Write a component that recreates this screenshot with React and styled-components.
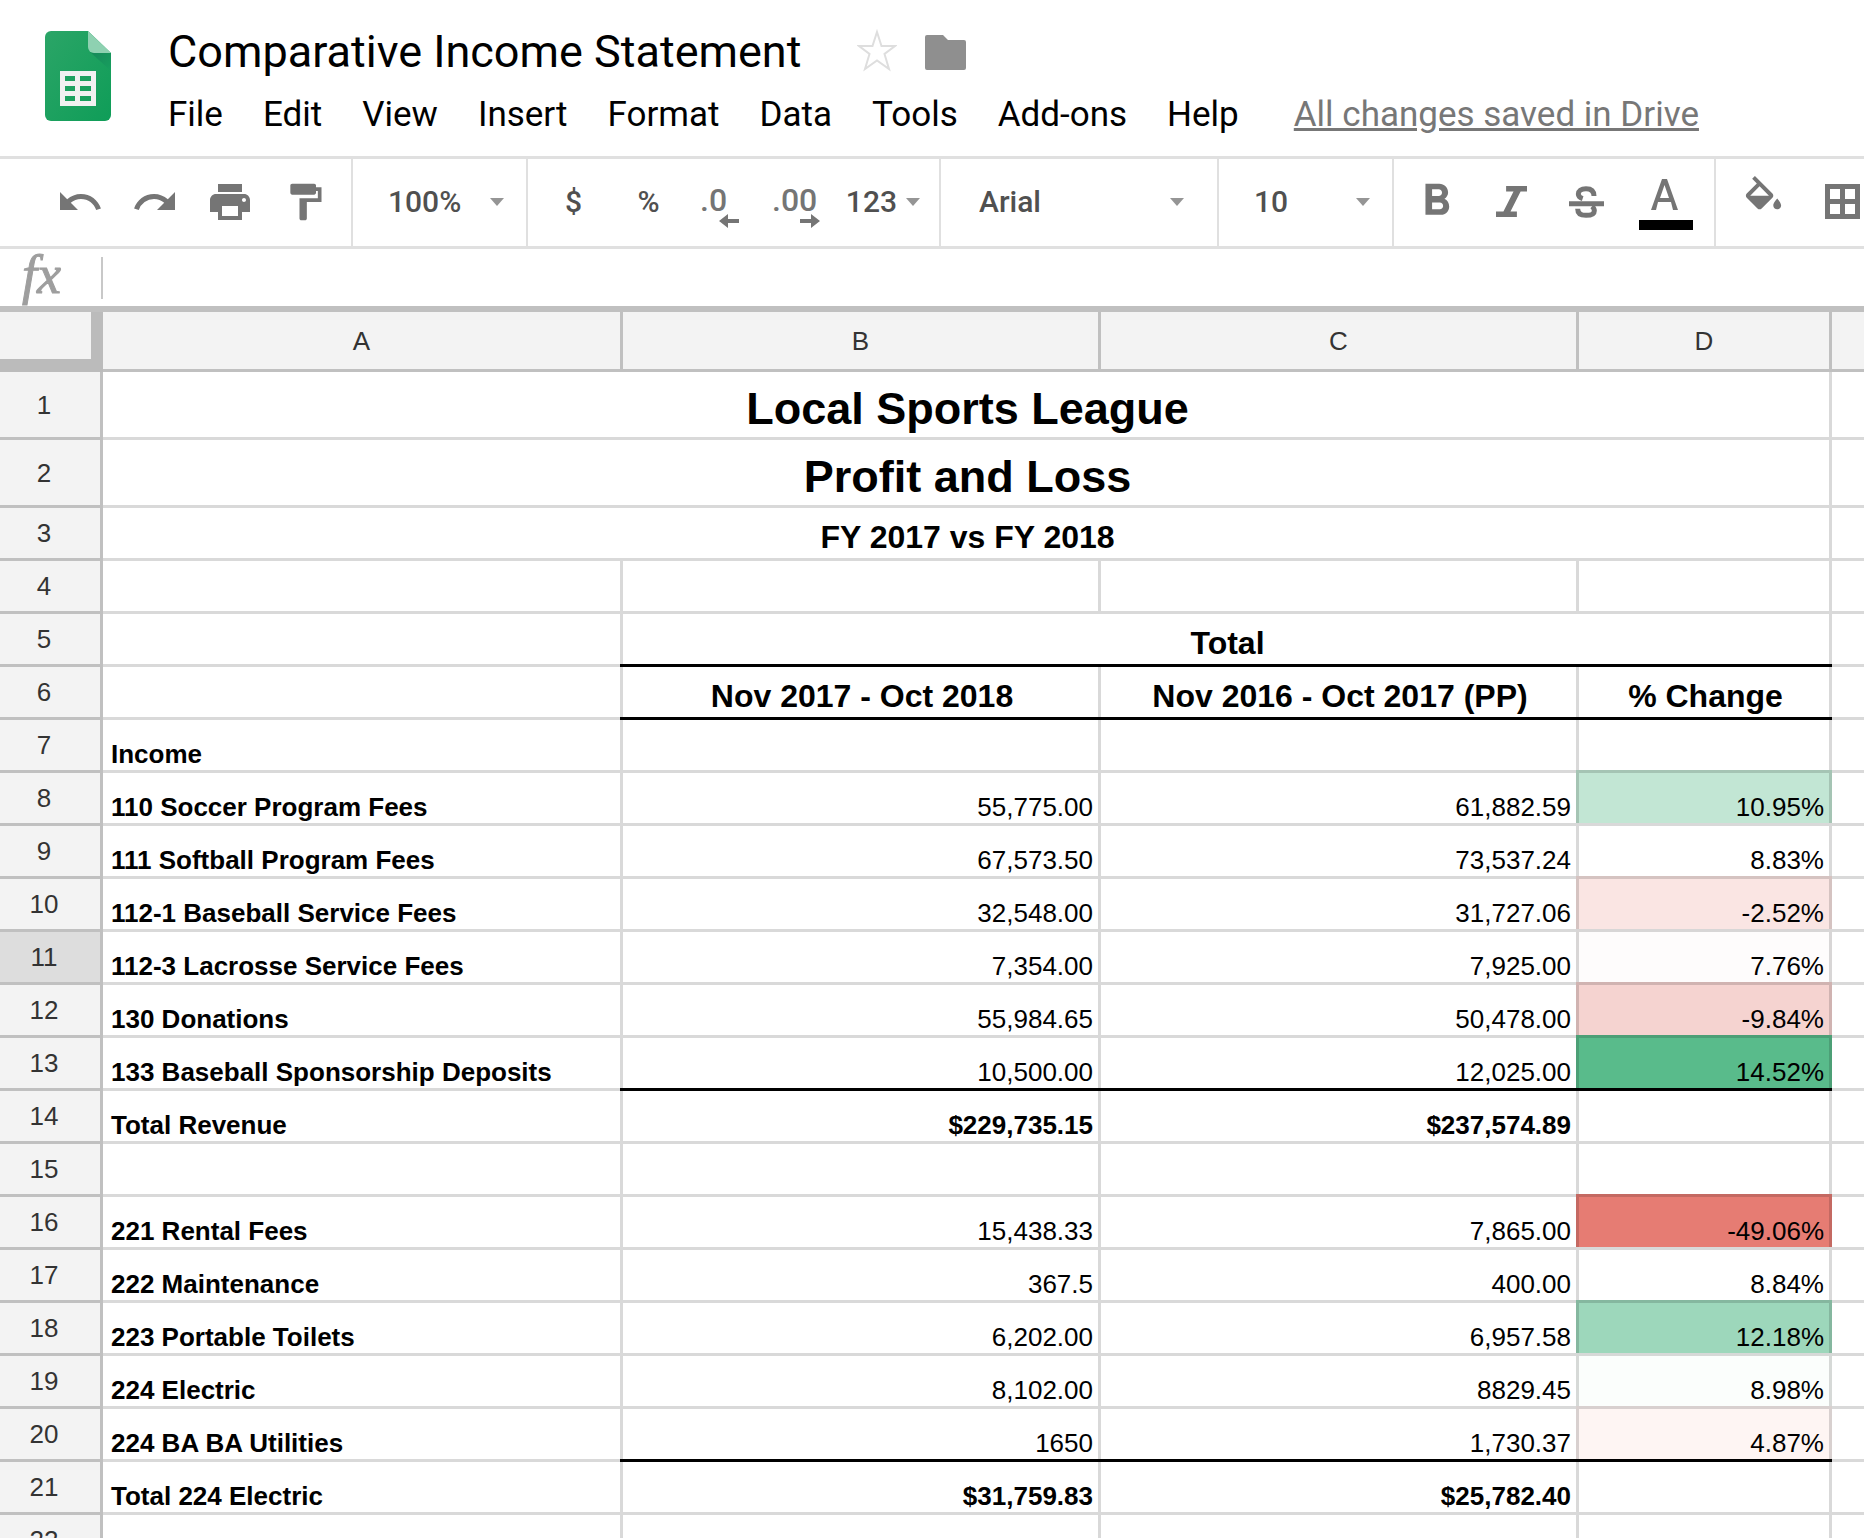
import React from 'react';
import styled, { createGlobalStyle, css } from 'styled-components';
import { MdUndo, MdRedo, MdPrint, MdFormatPaint, MdFormatBold } from 'react-icons/md';

const GlobalStyle = createGlobalStyle`
  * {
    box-sizing: border-box;
  }

  body {
    margin: 0;
    background: #ffffff;
    color: #000000;
    font-family: Roboto, sans-serif;
  }

  button, input, select {
    margin: 0;
    padding: 0;
    border: 0;
    background: none;
    color: inherit;
    font: inherit;
  }
`;

const Page = styled.div`
  display: flex;
  flex-direction: column;
  height: 100vh;
  overflow: hidden;
`;

const Header = styled.header`
  display: flex;
  flex: none;
  height: 156px;
  padding: 31px 45px 0;
  gap: 57px;
`;

const Logo = styled.svg`
  flex: none;
  width: 66px;
  height: 90px;
`;

const HeaderText = styled.div`
  display: flex;
  flex-direction: column;
  gap: 14px;
`;

const TitleRow = styled.div`
  display: flex;
  align-items: center;
  height: 42px;
`;

const Title = styled.h1`
  margin: 0 56px 0 0;
  font-size: 45px;
  font-weight: 400;
  line-height: 40px;
  white-space: nowrap;
`;

const TitleButton = styled.button`
  display: flex;
  margin-right: 28px;
  color: #8f8f8f;
`;

const MenuBar = styled.nav`
  display: flex;
  align-items: center;
  gap: 40px;
  height: 56px;
`;

const MenuItem = styled.button`
  font-size: 35px;
  line-height: 40px;
  white-space: nowrap;
`;

const SavedLink = styled.a`
  margin-left: 15px;
  color: #777777;
  font-size: 35px;
  line-height: 40px;
  white-space: nowrap;
`;

const Toolbar = styled.div`
  display: flex;
  flex: none;
  height: 93px;
  border-top: 3px solid #e0e0e0;
  border-bottom: 3px solid #e0e0e0;
  overflow: hidden;
  color: #757575;
`;

const Group = styled.div`
  display: flex;
  flex: none;
  align-items: center;
  width: ${props => props.$width}px;
  padding: 0 0 2px ${props => props.$pad || 0}px;
  border-right: 2px solid #e0e0e0;
`;

const ToolButton = styled.button`
  display: flex;
  flex: none;
  align-items: center;
  justify-content: center;
  width: ${props => (props.$wide ? 84 : 75)}px;
  height: 75px;
  color: ${props => (props.$text ? '#505050' : 'inherit')};
  font-size: 30px;
  font-weight: 500;
`;

const FormatButton = styled(ToolButton)`
  justify-content: flex-end;
  gap: 9px;
`;

const Picker = styled.label`
  display: flex;
  flex: 1;
  align-items: center;
  justify-content: space-between;
  padding: 0 ${props => (props.$roomy ? '33px 0 38px' : '22px 0 35px')};
  color: #505050;
`;

const PickerSelect = styled.select`
  flex: 1;
  min-width: 0;
  appearance: none;
  font-size: 30px;
  font-weight: 500;
  line-height: 40px;
`;

const Caret = styled.span`
  flex: none;
  border: 7px solid transparent;
  border-top: 8px solid #959595;
  border-bottom-width: 0;
`;

const FormulaBar = styled.label`
  display: flex;
  flex: none;
  align-items: center;
  height: 57px;
`;

const FormulaIcon = styled.span`
  width: 101px;
  padding: 0 0 6px 22px;
  color: #9e9e9e;
  font-family: "Liberation Serif", serif;
  font-size: 54px;
  font-style: italic;
  line-height: 50px;
  -webkit-text-stroke: 1px #9e9e9e;
`;

const FormulaInput = styled.input`
  flex: 1;
  height: 42px;
  padding: 0 8px;
  border-left: 2px solid #c8c8c8;
  font-size: 26px;
  outline: none;
`;

const Sheet = styled.main`
  flex: 1;
  min-height: 0;
  border-top: 6px solid #c0c0c0;
  overflow: hidden;
`;

const Grid = styled.table`
  width: 100%;
  table-layout: fixed;
  border-collapse: separate;
  border-spacing: 0;
  font-family: "Liberation Sans", Arial, sans-serif;
  font-size: 26px;
  line-height: 30px;

  tr > :last-child {
    border-right-width: 0;
  }
`;

const Col = styled.col`
  width: ${props => (props.$width ? `${props.$width}px` : 'auto')};
`;

const Corner = styled.td`
  height: 60px;
  padding: 0;
  border: solid #bbbbbb;
  border-width: 0 12px 13px 0;
  background: #f3f3f3;
`;

const ColumnHeader = styled.th`
  padding: 0;
  border: solid #c0c0c0;
  border-width: 0 3px 3px 0;
  background: #f3f3f3;
  color: #333333;
  font-weight: 400;
`;

const Row = styled.tr`
  height: ${props => (props.$tall ? 68 : 53)}px;
`;

const RowHeader = styled.th`
  padding: 0 12px 0 0;
  border: solid #c0c0c0;
  border-width: 0 3px 3px 0;
  background: ${props => (props.$active ? '#dddddd' : '#f3f3f3')};
  color: #333333;
  font-weight: 400;
`;

const textSizes = {
  body: [26, 32],
  heading: [32, 42],
  title: [45, 56],
};

const Cell = styled.td`
  position: relative;
  padding: 0 5px 0 8px;
  border: solid #d9d9d9;
  border-width: 0 3px 3px 0;
  font-size: ${props => textSizes[props.$size || 'body'][0]}px;
  font-weight: ${props => (props.$bold || props.$size ? 700 : 400)};
  line-height: ${props => textSizes[props.$size || 'body'][1]}px;
  text-align: ${props => props.$align || 'left'};
  vertical-align: bottom;
  white-space: nowrap;

  /* fill also tints the grid lines above and beside the cell */
  ${props => props.$fill && css`
    &::before {
      content: '';
      position: absolute;
      inset: -3px -3px 0;
      border: solid ${props.$edge};
      border-width: 3px 3px 0;
      background: ${props.$fill};
    }
  `}

  ${props => props.$line && css`
    &::after {
      content: '';
      position: absolute;
      inset: auto -3px -3px;
      z-index: 1;
      height: 3px;
      background: #000000;
    }
  `}
`;

const CellText = styled.span`
  position: relative;
`;

const menus = ['File', 'Edit', 'View', 'Insert', 'Format', 'Data', 'Tools', 'Add-ons', 'Help'];

const fills = {
  green1: ['#fbfefc', '#d6d9d7'],
  green2: ['#c2e6d4', '#a5c4b4'],
  green3: ['#9dd7bb', '#85b79f'],
  green4: ['#59bb8b', '#4c9f76'],
  red0: ['#fefcfc', '#d8d6d6'],
  red1: ['#fef5f3', '#d8d0cf'],
  red2: ['#fae5e3', '#d5c3c1'],
  red3: ['#f5d3d0', '#d0b3b1'],
  red4: ['#e67c73', '#c46962'],
};

const rows = [
  { merged: 'Local Sports League', size: 'title' },
  { merged: 'Profit and Loss', size: 'title' },
  { merged: 'FY 2017 vs FY 2018', size: 'heading' },
  { cells: ['', '', '', ''] },
  { total: 'Total' },
  { cells: ['', 'Nov 2017 - Oct 2018', 'Nov 2016 - Oct 2017 (PP)', '% Change'], heading: true, line: true },
  { cells: ['Income', '', '', ''] },
  { cells: ['110 Soccer Program Fees', '55,775.00', '61,882.59', '10.95%'], fill: 'green2' },
  { cells: ['111 Softball Program Fees', '67,573.50', '73,537.24', '8.83%'] },
  { cells: ['112-1 Baseball Service Fees', '32,548.00', '31,727.06', '-2.52%'], fill: 'red2' },
  { cells: ['112-3 Lacrosse Service Fees', '7,354.00', '7,925.00', '7.76%'], fill: 'red0', active: true },
  { cells: ['130 Donations', '55,984.65', '50,478.00', '-9.84%'], fill: 'red3' },
  { cells: ['133 Baseball Sponsorship Deposits', '10,500.00', '12,025.00', '14.52%'], fill: 'green4', line: true },
  { cells: ['Total Revenue', '$229,735.15', '$237,574.89', ''], bold: true },
  { cells: ['', '', '', ''] },
  { cells: ['221 Rental Fees', '15,438.33', '7,865.00', '-49.06%'], fill: 'red4' },
  { cells: ['222 Maintenance', '367.5', '400.00', '8.84%'] },
  { cells: ['223 Portable Toilets', '6,202.00', '6,957.58', '12.18%'], fill: 'green3' },
  { cells: ['224 Electric', '8,102.00', '8829.45', '8.98%'], fill: 'green1' },
  { cells: ['224 BA BA Utilities', '1650', '1,730.37', '4.87%'], fill: 'red1', line: true },
  { cells: ['Total 224 Electric', '$31,759.83', '$25,782.40', ''], bold: true },
  { cells: ['', '', '', ''] },
];

const SheetsLogo = () => (
  <Logo viewBox="0 0 66 90" aria-label="Sheets">
    <defs>
      <linearGradient id="sheet" x1="0" y1="0" x2="1" y2="1">
        <stop offset="0" stopColor="#2ba567" />
        <stop offset="1" stopColor="#0f9d58" />
      </linearGradient>
      <linearGradient id="fold" x1="0" y1="0" x2="1" y2="1">
        <stop offset="0" stopColor="#17885a" />
        <stop offset="1" stopColor="#17a05e" />
      </linearGradient>
    </defs>
    <path d="M6 0H43L66 22V84a6 6 0 0 1-6 6H6a6 6 0 0 1-6-6V6a6 6 0 0 1 6-6Z" fill="url(#sheet)" />
    <path d="M45 21L66 40V22H49Z" fill="url(#fold)" />
    <path d="M43 0L66 22H49a6 6 0 0 1-6-6Z" fill="#8ed1b1" />
    <path d="M15 40H51V75H15ZM20 45V50H30V45ZM35 45V50H46V45ZM20 55V60H30V55ZM35 55V60H46V55ZM20 65V70H30V65ZM35 65V70H46V65Z" fill="#f1f1f1" fillRule="evenodd" />
  </Logo>
);

const StarIcon = () => (
  <svg width="40" height="46" viewBox="0 0 40 46" fill="none" stroke="#dedede" strokeWidth="2">
    <path d="M20 3L24.500 17H38L27.500 25L32 40L20 31.500L8 40L12.500 25L2 17H15.500Z" />
  </svg>
);

const FolderIcon = () => (
  <svg width="41" height="35" viewBox="0 0 41 35" fill="currentColor">
    <path d="M2 0H18L23 5H39a2 2 0 0 1 2 2V33a2 2 0 0 1-2 2H2a2 2 0 0 1-2-2V2a2 2 0 0 1 2-2Z" />
  </svg>
);

const DecimalIcon = ({ digits, right }) => (
  <svg width="54" height="56" viewBox="0 0 54 56" fill="currentColor">
    <text x={right ? 0 : 3} y="37" fontSize="32" fontWeight="500">{digits}</text>
    {right
      ? <path d="M28 45H39V40L48 47L39 54V49H28Z" />
      : <path d="M42 45H31V40L22 47L31 54V49H42Z" />}
  </svg>
);

const ItalicIcon = () => (
  <svg width="31" height="31" viewBox="261 63 92 92" fill="currentColor">
    <path d="M291 63H353V79H334L304 139H323V155H261V139H283L313 79H291Z" />
  </svg>
);

const StrikeIcon = () => (
  <svg width="35" height="32" viewBox="480 63 105 96" fill="none" stroke="currentColor" strokeWidth="15">
    <path d="M555 93C555 78 546 71 531 71C516 71 508 78 508 87C508 94 512 98 521 101" />
    <path d="M506 131C506 145 515 151 531 151C548 151 556 145 556 137C556 132 554 128 549 124" />
    <path d="M480 116H585" />
  </svg>
);

const TextColorIcon = () => (
  <svg width="54" height="56" viewBox="0 0 54 56">
    <path d="M23 5H28L39 36H34L32 28H19L17 36H12ZM25.500 11L21 24H30Z" fill="currentColor" fillRule="evenodd" />
    <rect x="0" y="46" width="54" height="10" fill="#000000" />
  </svg>
);

const FillIcon = () => (
  <svg width="47" height="47" viewBox="0 1 24 24" fill="currentColor" overflow="visible">
    <path d="M16.560 8.940L7.620 0 6.210 1.410l2.380 2.380-5.150 5.150c-.59.59-.59 1.540 0 2.120l5.500 5.500c.29.29.68.44 1.060.44s.77-.15 1.060-.44l5.500-5.500c.59-.58.59-1.530 0-2.120zM5.210 10L10 5.210 14.790 10H5.210zM19 11.500s-2 2.170-2 3.500c0 1.100.9 2 2 2s2-.9 2-2c0-1.330-2-3.500-2-3.500z" />
  </svg>
);

const BordersIcon = () => (
  <svg width="35" height="35" viewBox="0 0 35 35" fill="currentColor">
    <path d="M0 0H35V35H0ZM5 5V15H15V5ZM20 5V15H30V5ZM5 20V30H15V20ZM20 20V30H30V20Z" fillRule="evenodd" />
  </svg>
);

const SheetRow = ({ row, number }) => {
  const header = (
    <RowHeader scope="row" $active={row.active}>{number}</RowHeader>
  );

  if (row.merged) {
    return (
      <Row $tall={row.size === 'title'}>
        {header}
        <Cell colSpan={4} $align="center" $size={row.size}>{row.merged}</Cell>
        <Cell />
      </Row>
    );
  }

  if (row.total) {
    return (
      <Row>
        {header}
        <Cell />
        <Cell colSpan={3} $align="center" $size="heading" $line>{row.total}</Cell>
        <Cell />
      </Row>
    );
  }

  return (
    <Row>
      {header}
      {row.cells.map((text, i) => {
        const [fill, edge] = (i === 3 && fills[row.fill]) || [];
        return (
          <Cell
            key={i}
            $align={row.heading ? 'center' : i > 0 ? 'right' : 'left'}
            $size={row.heading ? 'heading' : undefined}
            $bold={i === 0 || row.bold}
            $fill={fill}
            $edge={edge}
            $line={row.line && i > 0}
          >
            <CellText>{text}</CellText>
          </Cell>
        );
      })}
      <Cell />
    </Row>
  );
};

const App = () => {
  return (
    <Page>
      <GlobalStyle />
      <Header>
        <SheetsLogo />
        <HeaderText>
          <TitleRow>
            <Title>Comparative Income Statement</Title>
            <TitleButton aria-label="Star"><StarIcon /></TitleButton>
            <TitleButton aria-label="Move to folder"><FolderIcon /></TitleButton>
          </TitleRow>
          <MenuBar>
            {menus.map(name => <MenuItem key={name}>{name}</MenuItem>)}
            <SavedLink href="#">All changes saved in Drive</SavedLink>
          </MenuBar>
        </HeaderText>
      </Header>

      <Toolbar>
        <Group $width={353} $pad={42}>
          <ToolButton aria-label="Undo"><MdUndo size={48} /></ToolButton>
          <ToolButton aria-label="Redo"><MdRedo size={48} /></ToolButton>
          <ToolButton aria-label="Print"><MdPrint size={48} /></ToolButton>
          <ToolButton aria-label="Paint format"><MdFormatPaint size={44} /></ToolButton>
        </Group>
        <Group $width={175}>
          <Picker>
            <PickerSelect aria-label="Zoom"><option>100%</option></PickerSelect>
            <Caret />
          </Picker>
        </Group>
        <Group $width={413} $pad={8}>
          <ToolButton aria-label="Format as currency" $text>$</ToolButton>
          <ToolButton aria-label="Format as percent" $text>%</ToolButton>
          <ToolButton aria-label="Decrease decimal places"><DecimalIcon digits=".0" /></ToolButton>
          <ToolButton aria-label="Increase decimal places"><DecimalIcon digits=".00" right /></ToolButton>
          <FormatButton aria-label="More formats" $text $wide>123<Caret /></FormatButton>
        </Group>
        <Group $width={278}>
          <Picker $roomy>
            <PickerSelect aria-label="Font"><option>Arial</option></PickerSelect>
            <Caret />
          </Picker>
        </Group>
        <Group $width={175}>
          <Picker>
            <PickerSelect aria-label="Font size"><option>10</option></PickerSelect>
            <Caret />
          </Picker>
        </Group>
        <Group $width={322} $pad={5}>
          <ToolButton aria-label="Bold"><MdFormatBold size={53} /></ToolButton>
          <ToolButton aria-label="Italic"><ItalicIcon /></ToolButton>
          <ToolButton aria-label="Strikethrough"><StrikeIcon /></ToolButton>
          <ToolButton aria-label="Text color" $wide><TextColorIcon /></ToolButton>
        </Group>
        <Group $width={200} $pad={5}>
          <ToolButton aria-label="Fill color" $wide><FillIcon /></ToolButton>
          <ToolButton aria-label="Borders"><BordersIcon /></ToolButton>
        </Group>
      </Toolbar>

      <FormulaBar>
        <FormulaIcon>fx</FormulaIcon>
        <FormulaInput type="text" aria-label="Formula" />
      </FormulaBar>

      <Sheet>
        <Grid>
          <colgroup>
            {[103, 520, 478, 478, 253, 0].map((width, i) => <Col key={i} $width={width} />)}
          </colgroup>
          <thead>
            <tr>
              <Corner />
              {['A', 'B', 'C', 'D', ''].map(name => (
                <ColumnHeader key={name} scope="col">{name}</ColumnHeader>
              ))}
            </tr>
          </thead>
          <tbody>
            {rows.map((row, i) => <SheetRow key={i} row={row} number={i + 1} />)}
          </tbody>
        </Grid>
      </Sheet>
    </Page>
  );
};

export default App;
